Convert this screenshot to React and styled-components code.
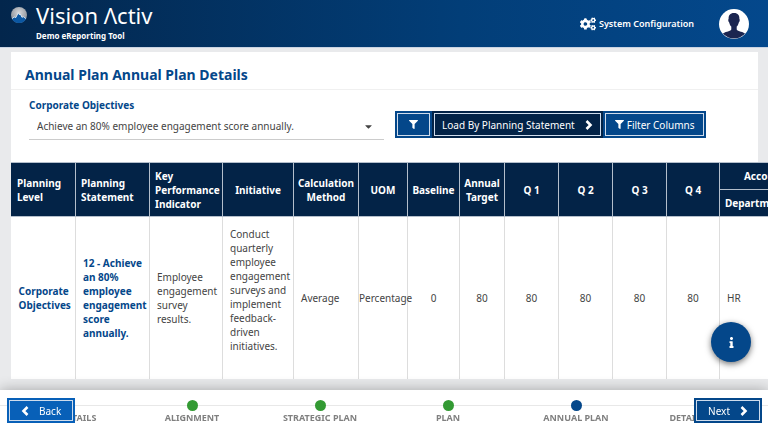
import React from 'react'
import styled, { createGlobalStyle } from 'styled-components'
import { FaCaretDown, FaCogs, FaFilter, FaInfo } from 'react-icons/fa'

const navy = '#032347'
const blue = '#04478a'
const brightBlue = '#0860b8'

const GlobalStyle = createGlobalStyle`
  * {
    box-sizing: border-box;
  }

  body {
    margin: 0;
    overflow: hidden;
    background: #e9eaec;
    color: #444;
    font-family: "Noto Sans", "Open Sans", sans-serif;
    font-size: 10px;
    line-height: 14px;
  }

  button, select {
    font: inherit;
  }
`

const Page = styled.div`
  display: flex;
  flex-direction: column;
  min-height: 100vh;
  overflow: hidden;
`

const Header = styled.header`
  display: flex;
  align-items: center;
  justify-content: space-between;
  height: 48px;
  padding: 0 19px 0 11px;
  color: #fff;
  background: linear-gradient(90deg, #03264c, #023e78 60%, #04488c);
  border-bottom: 1px solid #c9d3e2;
`

const Brand = styled.div`
  display: flex;
  align-items: flex-start;
  gap: 9px;
  height: 44px;
`

const BrandMark = styled.svg`
  width: 16px;
  height: 16px;
  margin-top: 5px;
`

const BrandName = styled.div`
  font-size: 22px;
  line-height: 27px;
`

const BrandTag = styled.div`
  font-size: 8px;
  font-weight: 700;
  line-height: 13px;
`

const HeaderTools = styled.nav`
  display: flex;
  align-items: center;
  gap: 25px;
  height: 42px;
`

const HeaderLink = styled.a`
  display: flex;
  align-items: center;
  gap: 3px;
  color: #fff;
  font-size: 9px;
  font-weight: 600;
  text-decoration: none;

  svg {
    width: 16px;
    height: 16px;
  }
`

const Avatar = styled.svg`
  width: 30px;
  height: 30px;
`

const Card = styled.main`
  margin: 4px 10px 0 11px;
  background: #fff;
`

const Title = styled.h1`
  margin: 0;
  padding: 14px 14px 5px;
  border-bottom: 1px solid #f0f0f0;
  color: ${blue};
  font-size: 14px;
  font-weight: 700;
  line-height: 18px;
`

const Controls = styled.div`
  display: flex;
  align-items: flex-start;
  gap: 11px;
  padding: 8px 18px 22px;
`

const Field = styled.div`
  position: relative;
  flex: 0 1 355px;
  color: #444;

  svg {
    position: absolute;
    right: 10px;
    bottom: 8px;
    pointer-events: none;
  }
`

const FieldLabel = styled.label`
  display: block;
  color: ${blue};
  font-weight: 700;
`

const Select = styled.select`
  display: block;
  width: 100%;
  height: 28px;
  padding: 0 24px 0 8px;
  border: 0;
  border-bottom: 1px solid #ccc;
  background: transparent;
  color: inherit;
  appearance: none;
`

const ButtonBar = styled.div`
  display: flex;
  margin-top: 13px;
`

const Button = styled.button`
  display: flex;
  align-items: center;
  justify-content: center;
  gap: ${({ $gap }) => $gap || 3}px;
  height: ${({ $height }) => $height || 27}px;
  padding: 0 ${({ $pad }) => $pad || 10}px;
  border: 2px solid ${({ $tone }) => $tone || blue};
  background: ${({ $tone }) => $tone || blue};
  box-shadow: inset 0 0 0 1px #cfdcec;
  color: #fff;
  white-space: nowrap;
`

const Chevron = styled.svg`
  width: 8px;
  height: 10px;
  fill: none;
  stroke: currentColor;
  stroke-width: 2.6;
`

const Table = styled.table`
  width: 829px;
  table-layout: fixed;
  border-collapse: collapse;
`

const HeadCell = styled.th`
  height: ${({ $half }) => ($half ? 27 : 54)}px;
  padding: 0 ${({ $left }) => ($left ? 5 : 2)}px;
  border: 1px solid #b4bfcc;
  border-left-color: ${({ $first }) => ($first ? navy : '#b4bfcc')};
  background: ${navy};
  color: #fff;
  font-weight: 700;
  text-align: ${({ $left }) => ($left ? 'left' : 'center')};
`

const Cell = styled.td`
  height: 162px;
  padding: 0 0 0 ${({ $center }) => ($center ? 0 : 7)}px;
  border-right: 1px solid #ddd;
  color: ${({ $strong }) => ($strong ? blue : '#444')};
  font-weight: ${({ $strong }) => ($strong ? 700 : 400)};
  text-align: ${({ $center }) => ($center ? 'center' : 'left')};
  background: #fff;
`

const CellNote = styled.p`
  margin: 0 0 16px;
`

const InfoButton = styled.button`
  position: fixed;
  right: 17px;
  bottom: 61px;
  display: flex;
  align-items: center;
  justify-content: center;
  width: 40px;
  height: 40px;
  padding: 0;
  border: 0;
  border-radius: 50%;
  background: ${blue};
  box-shadow: 0 2px 6px rgba(0, 0, 0, .55);
  color: #fff;
`

const Footer = styled.footer`
  position: fixed;
  right: 0;
  bottom: 0;
  left: 0;
  height: 33px;
  background: #fff;
  box-shadow: 0 0 14px rgba(0, 0, 0, .3);
`

const Steps = styled.ol`
  display: grid;
  grid-template-columns: repeat(6, 1fr);
  margin: 0;
  padding: 10px 0 0;
  list-style: none;
`

const Step = styled.li`
  display: flex;
  flex-direction: column;
  align-items: center;
  color: #808080;
  font-size: 9px;
  font-weight: 700;
  white-space: nowrap;
  background: linear-gradient(#e8e8e8, #e8e8e8) 0 5px / 100% 1px no-repeat;

  &::before {
    content: "";
    width: 11px;
    height: 11px;
    border-radius: 50%;
    background: ${({ $current }) => ($current ? blue : '#339a33')};
  }
`

const FooterButtons = styled.div`
  position: absolute;
  top: 8px;
  right: 6px;
  left: 7px;
  display: flex;
  justify-content: space-between;
`

const columnWidths = [64, 74, 73, 71, 65, 49, 52, 45, 54, 54, 54, 53, 121]

const leftHeads = ['Planning Level', 'Planning Statement', 'Key Performance Indicator']

const centerHeads = [
  'Initiative',
  'Calculation Method',
  'UOM',
  'Baseline',
  'Annual Target',
  'Q 1',
  'Q 2',
  'Q 3',
  'Q 4',
]

const numbers = ['0', '80', '80', '80', '80', '80']

const steps = ['BASIC DETAILS', 'ALIGNMENT', 'STRATEGIC PLAN', 'PLAN', 'ANNUAL PLAN', 'DETAILED PLAN']

function Logo() {
  return (
    <BrandMark viewBox="0 0 16 16" aria-hidden="true">
      <defs>
        <radialGradient id="silver" cx="50%" cy="35%" r="65%">
          <stop offset="0" stopColor="#d5d7da" />
          <stop offset="1" stopColor="#858a92" />
        </radialGradient>
      </defs>
      <circle cx="8" cy="8" r="8" fill="url(#silver)" />
      <path d="M.8 11.500 3.200 10 4.800 10.500 7.300 5.800 8.600 8 9.400 7.200 11 10.300 12.200 9.500 15.200 11.500A8 8 0 0 1 .8 11.500Z" fill="#0b57a2" />
      <path
        d="M1 11.700 3.200 10 4.800 10.600 7.300 5.800 8.600 8 9.400 7.200 11 10.400 12.200 9.600 15 11.700"
        fill="none"
        stroke="#f3f7fb"
        strokeWidth=".8"
      />
    </BrandMark>
  )
}

function UserPicture() {
  return (
    <Avatar viewBox="0 0 30 30" role="img" aria-label="User">
      <defs>
        <clipPath id="round">
          <circle cx="15" cy="15" r="14.5" />
        </clipPath>
      </defs>
      <circle cx="15" cy="15" r="15" fill="#fff" />
      <path
        clipPath="url(#round)"
        d="M15 4c-4 0-5.600 2.500-5.400 6-.7.3-.3 3 .6 3.400.4 2 1.200 3.300 2.100 4.200v2.800C11.500 22.400 5 22.600 3.500 25V30h23v-5c-1.500-2.400-8-2.600-8.800-4.600v-2.800c.9-.9 1.700-2.200 2.100-4.200.9-.4 1.300-3.100.6-3.400C20.600 6.500 19 4 15 4Z"
        fill="#1b2550"
      />
    </Avatar>
  )
}

function Arrow({ left }) {
  return (
    <Chevron viewBox="0 0 8 10" aria-hidden="true">
      <path d={left ? 'M6.500 1 2.500 5l4 4' : 'M1.500 1l4 4-4 4'} />
    </Chevron>
  )
}

function PlanTable() {
  return (
    <Table>
      <colgroup>
        {columnWidths.map((width, i) => <col key={i} style={{ width }} />)}
      </colgroup>
      <thead>
        <tr>
          {leftHeads.map((head, i) => (
            <HeadCell key={head} rowSpan={2} $left $first={i === 0}>{head}</HeadCell>
          ))}
          {centerHeads.map(head => <HeadCell key={head} rowSpan={2}>{head}</HeadCell>)}
          <HeadCell $half>Accountability</HeadCell>
        </tr>
        <tr>
          <HeadCell $half $left>Department</HeadCell>
        </tr>
      </thead>
      <tbody>
        <tr>
          <Cell $strong>Corporate Objectives</Cell>
          <Cell $strong>12 - Achieve an 80% employee engagement score annually.</Cell>
          <Cell>Employee engagement survey results.</Cell>
          <Cell>
            <CellNote>
              Conduct quarterly employee engagement surveys and implement feedback-driven initiatives.
            </CellNote>
          </Cell>
          <Cell>Average</Cell>
          <Cell $center>Percentage</Cell>
          {numbers.map((number, i) => <Cell key={i} $center>{number}</Cell>)}
          <Cell>HR</Cell>
        </tr>
      </tbody>
    </Table>
  )
}

export default function App() {
  return (
    <Page>
      <GlobalStyle />
      <Header>
        <Brand>
          <Logo />
          <div>
            <BrandName>Vision Λctiv</BrandName>
            <BrandTag>Demo eReporting Tool</BrandTag>
          </div>
        </Brand>
        <HeaderTools>
          <HeaderLink href="#configuration"><FaCogs />System Configuration</HeaderLink>
          <UserPicture />
        </HeaderTools>
      </Header>

      <Card>
        <Title>Annual Plan Annual Plan Details</Title>
        <Controls>
          <Field>
            <FieldLabel htmlFor="objective">Corporate Objectives</FieldLabel>
            <Select id="objective">
              <option>Achieve an 80% employee engagement score annually.</option>
            </Select>
            <FaCaretDown size={11} />
          </Field>
          <ButtonBar>
            <Button $pad={12} aria-label="Filter"><FaFilter size={9} /></Button>
            <Button $tone={navy} $gap={10} $pad={8}>Load By Planning Statement<Arrow /></Button>
            <Button><FaFilter size={9} />Filter Columns</Button>
          </ButtonBar>
        </Controls>
        <PlanTable />
      </Card>

      <InfoButton aria-label="Information"><FaInfo size={11} /></InfoButton>

      <Footer>
        <Steps>
          {steps.map(step => <Step key={step} $current={step === 'ANNUAL PLAN'}>{step}</Step>)}
        </Steps>
        <FooterButtons>
          <Button $tone={brightBlue} $gap={10} $height={25} $pad={12}><Arrow left />Back</Button>
          <Button $gap={10} $height={25} $pad={12}>Next<Arrow /></Button>
        </FooterButtons>
      </Footer>
    </Page>
  )
}
